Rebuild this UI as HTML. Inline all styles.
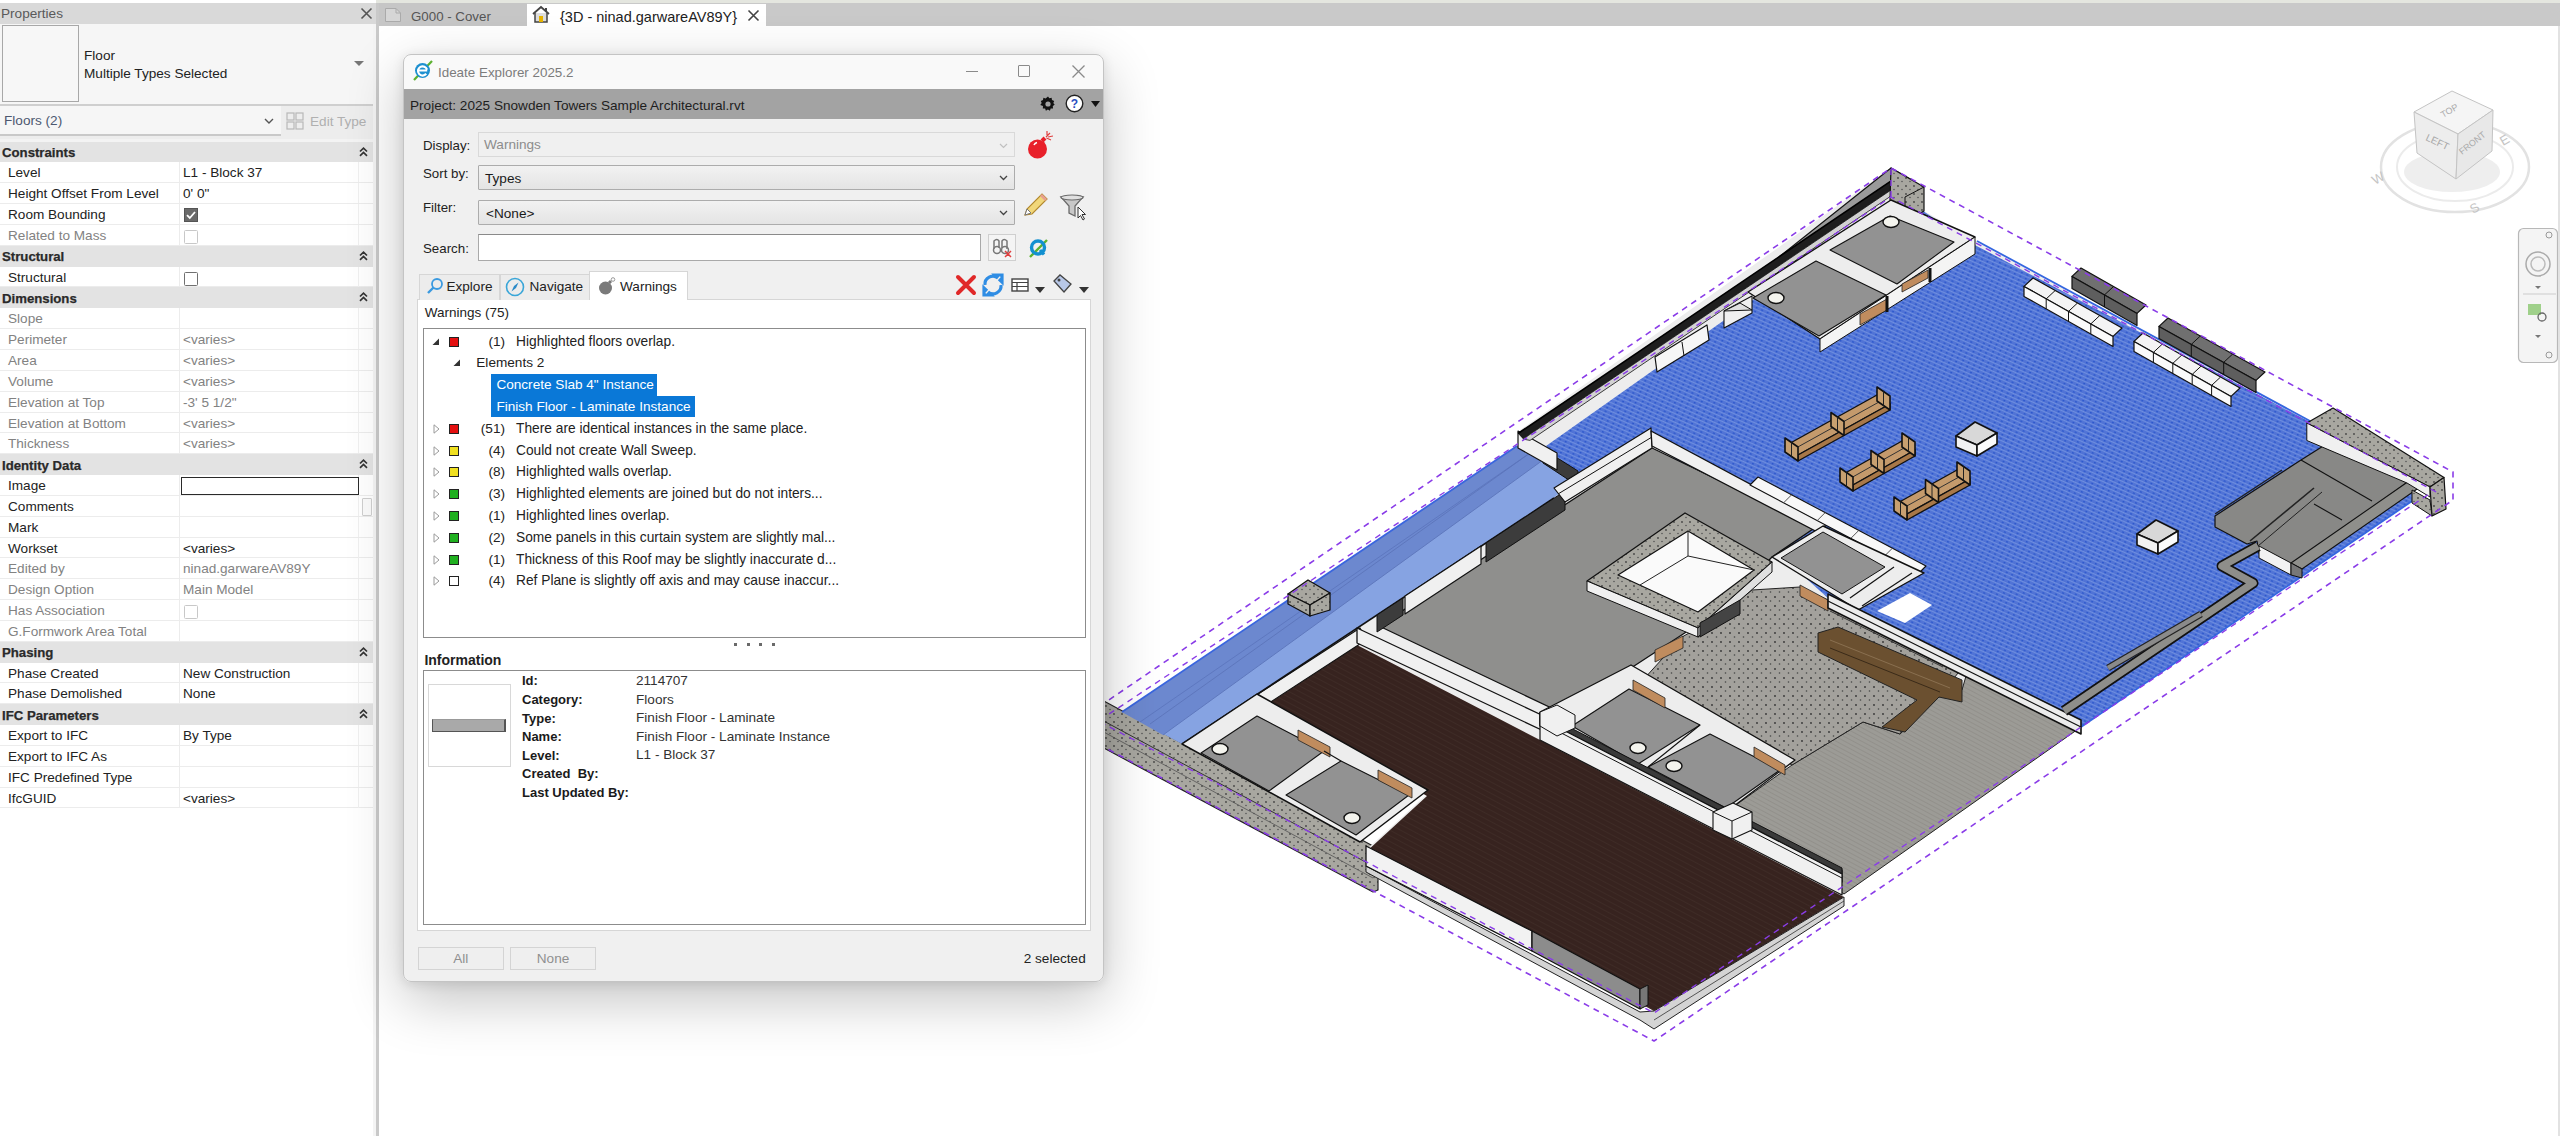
<!DOCTYPE html>
<html><head><meta charset="utf-8">
<style>
*{margin:0;padding:0;box-sizing:border-box}
html,body{width:2560px;height:1136px;overflow:hidden;background:#fff;font-family:"Liberation Sans",sans-serif;font-size:13.6px;color:#222}
.a{position:absolute}
.t{position:absolute;white-space:nowrap;line-height:1}
#props{left:0;top:0;width:376px;height:1136px;background:#fff}
.row{position:absolute;left:0;width:373px;height:21px;border-bottom:1px solid #ececec;background:#fff}
.row .l{position:absolute;left:8px;top:3px;white-space:nowrap}
.row .v{position:absolute;left:183px;top:3px;white-space:nowrap}
.row .c{position:absolute;left:179px;top:0;width:1px;height:20px;background:#ececec}
.row .c2{position:absolute;left:358px;top:0;width:1px;height:20px;background:#f0f0f0}
.hdr{position:absolute;left:0;width:373px;height:20px;background:#e3e3e3;font-weight:bold;color:#2a2a2a}
.hdr .l{position:absolute;left:2px;top:3.6px;font-size:13.2px;white-space:nowrap;-webkit-text-stroke:0.25px #2a2a2a}
.hdr .ch{position:absolute;left:359px;top:5px;width:9px;height:10px}
.g{color:#828282}
.cb{position:absolute;left:185px;top:4px;width:13px;height:13px;border:1px solid #6e6e6e;background:#fff}
.cb.g2{border-color:#c8c8c8}
</style></head><body>
<!-- top strip -->
<div class="a" style="left:0;top:0;width:2560px;height:3px;background:#e4e6df"></div>
<!-- properties panel -->
<div id="props" class="a">
  <div class="a" style="left:0;top:3px;width:376px;height:21px;background:#d9d9d9"></div>
  <div class="t" style="left:1px;top:7px;font-size:13.6px;color:#5a5a5a">Properties</div>
  <svg class="a" style="left:360px;top:7px" width="13" height="13"><path d="M1.5 1.5L11.5 11.5M11.5 1.5L1.5 11.5" stroke="#555" stroke-width="1.6"/></svg>
  <div class="a" style="left:0;top:24px;width:373px;height:81px;background:#f6f6f6"></div>
  <div class="a" style="left:2px;top:25px;width:77px;height:77px;border:1.5px solid #a8a8a8;background:#f7f7f7"></div>
  <div class="t" style="left:84px;top:49px">Floor</div>
  <div class="t" style="left:84px;top:67px">Multiple Types Selected</div>
  <svg class="a" style="left:354px;top:61px" width="10" height="6"><path d="M0 0L10 0L5 5Z" fill="#777"/></svg>
  <div class="a" style="left:0;top:104px;width:373px;height:2px;background:#cfcfcf"></div>
  <div class="a" style="left:0;top:106px;width:373px;height:34px;background:#ededed"></div>
  <div class="a" style="left:0;top:106px;width:281px;height:30px;background:#f6f6f6;border-bottom:2px solid #c9c9c9"></div>
  <div class="t" style="left:4px;top:114px;color:#4d5870">Floors (2)</div>
  <svg class="a" style="left:264px;top:118px" width="10" height="6"><path d="M1 1L5 5L9 1" stroke="#555" stroke-width="1.4" fill="none"/></svg>
  <svg class="a" style="left:286px;top:112px" width="18" height="18"><g fill="none" stroke="#b8b8b8" stroke-width="1.2"><rect x="1" y="1" width="7" height="7"/><rect x="10" y="1" width="7" height="7"/><rect x="1" y="10" width="7" height="7"/><rect x="10" y="10" width="7" height="7"/></g></svg>
  <div class="t" style="left:310px;top:115px;color:#b0b0b0">Edit Type</div>
  <div class="a" style="left:0;top:139px;width:373px;height:3px;background:#f3f3f3"></div>
  <div class="hdr" style="top:141.60px;height:20.84px"><span class="l">Constraints</span><svg class="ch" viewBox="0 0 9 10"><path d="M1 4.5L4.5 1.2L8 4.5M1 8.8L4.5 5.5L8 8.8" fill="none" stroke="#333" stroke-width="1.7"/></svg></div>
<div class="row" style="top:162.44px;height:20.84px"><span class="l">Level</span><span class="c"></span><span class="c2"></span><span class="v">L1 - Block 37</span></div>
<div class="row" style="top:183.28px;height:20.84px"><span class="l">Height Offset From Level</span><span class="c"></span><span class="c2"></span><span class="v">0'  0"</span></div>
<div class="row" style="top:204.12px;height:20.84px"><span class="l">Room Bounding</span><span class="c"></span><span class="c2"></span><svg class="a" style="left:184px;top:4px" width="14" height="14"><rect x="0.5" y="0.5" width="13" height="13" fill="#6a6a6a" stroke="#555"/><path d="M3 7.2L5.8 10L11 4" fill="none" stroke="#fff" stroke-width="1.8"/></svg></div>
<div class="row" style="top:224.96px;height:20.84px"><span class="l g">Related to Mass</span><span class="c"></span><span class="c2"></span><svg class="a" style="left:184px;top:5px" width="14" height="14"><rect x="0.5" y="0.5" width="13" height="13" rx="1" fill="#fff" stroke="#c8c8c8"/></svg></div>
<div class="hdr" style="top:245.80px;height:20.84px"><span class="l">Structural</span><svg class="ch" viewBox="0 0 9 10"><path d="M1 4.5L4.5 1.2L8 4.5M1 8.8L4.5 5.5L8 8.8" fill="none" stroke="#333" stroke-width="1.7"/></svg></div>
<div class="row" style="top:266.64px;height:20.84px"><span class="l">Structural</span><span class="c"></span><span class="c2"></span><svg class="a" style="left:184px;top:5px" width="14" height="14"><rect x="0.5" y="0.5" width="13" height="13" rx="1" fill="#fff" stroke="#707070"/></svg></div>
<div class="hdr" style="top:287.48px;height:20.84px"><span class="l">Dimensions</span><svg class="ch" viewBox="0 0 9 10"><path d="M1 4.5L4.5 1.2L8 4.5M1 8.8L4.5 5.5L8 8.8" fill="none" stroke="#333" stroke-width="1.7"/></svg></div>
<div class="row" style="top:308.32px;height:20.84px"><span class="l g">Slope</span><span class="c"></span><span class="c2"></span><span class="v g"></span></div>
<div class="row" style="top:329.16px;height:20.84px"><span class="l g">Perimeter</span><span class="c"></span><span class="c2"></span><span class="v g">&lt;varies&gt;</span></div>
<div class="row" style="top:350.00px;height:20.84px"><span class="l g">Area</span><span class="c"></span><span class="c2"></span><span class="v g">&lt;varies&gt;</span></div>
<div class="row" style="top:370.84px;height:20.84px"><span class="l g">Volume</span><span class="c"></span><span class="c2"></span><span class="v g">&lt;varies&gt;</span></div>
<div class="row" style="top:391.68px;height:20.84px"><span class="l g">Elevation at Top</span><span class="c"></span><span class="c2"></span><span class="v g">-3'  5 1/2"</span></div>
<div class="row" style="top:412.52px;height:20.84px"><span class="l g">Elevation at Bottom</span><span class="c"></span><span class="c2"></span><span class="v g">&lt;varies&gt;</span></div>
<div class="row" style="top:433.36px;height:20.84px"><span class="l g">Thickness</span><span class="c"></span><span class="c2"></span><span class="v g">&lt;varies&gt;</span></div>
<div class="hdr" style="top:454.20px;height:20.84px"><span class="l">Identity Data</span><svg class="ch" viewBox="0 0 9 10"><path d="M1 4.5L4.5 1.2L8 4.5M1 8.8L4.5 5.5L8 8.8" fill="none" stroke="#333" stroke-width="1.7"/></svg></div>
<div class="row" style="top:475.04px;height:20.84px"><span class="l">Image</span><span class="c"></span><span class="c2"></span><span class="a" style="left:181px;top:2px;width:178px;height:18px;border:1.6px solid #2a2a2a;background:#fff"></span></div>
<div class="row" style="top:495.88px;height:20.84px"><span class="l">Comments</span><span class="c"></span><span class="c2"></span><span class="a" style="left:362px;top:2px;width:10px;height:18px;border:1px solid #cfcfcf;border-radius:1px;background:#fafafa"></span></div>
<div class="row" style="top:516.72px;height:20.84px"><span class="l">Mark</span><span class="c"></span><span class="c2"></span><span class="v"></span></div>
<div class="row" style="top:537.56px;height:20.84px"><span class="l">Workset</span><span class="c"></span><span class="c2"></span><span class="v">&lt;varies&gt;</span></div>
<div class="row" style="top:558.40px;height:20.84px"><span class="l g">Edited by</span><span class="c"></span><span class="c2"></span><span class="v g">ninad.garwareAV89Y</span></div>
<div class="row" style="top:579.24px;height:20.84px"><span class="l g">Design Option</span><span class="c"></span><span class="c2"></span><span class="v g">Main Model</span></div>
<div class="row" style="top:600.08px;height:20.84px"><span class="l g">Has Association</span><span class="c"></span><span class="c2"></span><svg class="a" style="left:184px;top:5px" width="14" height="14"><rect x="0.5" y="0.5" width="13" height="13" rx="1" fill="#fff" stroke="#c8c8c8"/></svg></div>
<div class="row" style="top:620.92px;height:20.84px"><span class="l g">G.Formwork Area Total</span><span class="c"></span><span class="c2"></span><span class="v g"></span></div>
<div class="hdr" style="top:641.76px;height:20.84px"><span class="l">Phasing</span><svg class="ch" viewBox="0 0 9 10"><path d="M1 4.5L4.5 1.2L8 4.5M1 8.8L4.5 5.5L8 8.8" fill="none" stroke="#333" stroke-width="1.7"/></svg></div>
<div class="row" style="top:662.60px;height:20.84px"><span class="l">Phase Created</span><span class="c"></span><span class="c2"></span><span class="v">New Construction</span></div>
<div class="row" style="top:683.44px;height:20.84px"><span class="l">Phase Demolished</span><span class="c"></span><span class="c2"></span><span class="v">None</span></div>
<div class="hdr" style="top:704.28px;height:20.84px"><span class="l">IFC Parameters</span><svg class="ch" viewBox="0 0 9 10"><path d="M1 4.5L4.5 1.2L8 4.5M1 8.8L4.5 5.5L8 8.8" fill="none" stroke="#333" stroke-width="1.7"/></svg></div>
<div class="row" style="top:725.12px;height:20.84px"><span class="l">Export to IFC</span><span class="c"></span><span class="c2"></span><span class="v">By Type</span></div>
<div class="row" style="top:745.96px;height:20.84px"><span class="l">Export to IFC As</span><span class="c"></span><span class="c2"></span><span class="v"></span></div>
<div class="row" style="top:766.80px;height:20.84px"><span class="l">IFC Predefined Type</span><span class="c"></span><span class="c2"></span><span class="v"></span></div>
<div class="row" style="top:787.64px;height:20.84px"><span class="l">IfcGUID</span><span class="c"></span><span class="c2"></span><span class="v">&lt;varies&gt;</span></div>
  <!-- panel divider -->
  <div class="a" style="left:373px;top:24px;width:3px;height:1112px;background:#f4f4f4"></div>
</div>
<div class="a" style="left:376px;top:3px;width:3px;height:1133px;background:#c9c9c9"></div>

<!-- tab bar -->
<div class="a" style="left:379px;top:3px;width:2181px;height:23px;background:#c9c9c9"></div>
<div class="a" style="left:379px;top:3px;width:148px;height:23px;background:#c6c6c6"></div>
<svg class="a" style="left:384px;top:7px" width="18" height="16"><path d="M1.5 1.5H12L16.5 6V14.5H1.5Z" fill="#d6d6d6" stroke="#aaa" stroke-width="1"/><path d="M12 1.5V6H16.5" fill="none" stroke="#aaa"/></svg>
<div class="t" style="left:411px;top:10px;color:#555;font-size:13.3px">G000 - Cover</div>
<div class="a" style="left:527px;top:4px;width:239px;height:22px;background:#fff"></div>
<svg class="a" style="left:531px;top:5px" width="20" height="18"><path d="M2 9L10 2L18 9" fill="none" stroke="#444" stroke-width="1.8"/><path d="M4 8V17H16V8" fill="#ddd" stroke="#444" stroke-width="1.5"/><rect x="8" y="11" width="4" height="6" fill="#e8b400"/><rect x="14" y="3" width="2" height="4" fill="#444"/></svg>
<div class="t" style="left:560px;top:9.5px;color:#222;font-size:14.5px">{3D - ninad.garwareAV89Y}</div>
<svg class="a" style="left:747px;top:9px" width="13" height="13"><path d="M1.5 1.5L11.5 11.5M11.5 1.5L1.5 11.5" stroke="#444" stroke-width="1.6"/></svg>

<!-- 3D view -->
<div id="view" class="a" style="left:379px;top:26px;width:2181px;height:1110px;background:#fff"></div>
<svg class="a" style="left:0;top:0" width="2560" height="1136" viewBox="0 0 2560 1136">
<defs>
<clipPath id="vclip"><rect x="1105" y="26" width="1455" height="1110"/></clipPath>
<pattern id="blue" width="6" height="4" patternUnits="userSpaceOnUse" patternTransform="rotate(24)">
<rect width="6" height="4" fill="#5073d6"/><rect y="0" width="6" height="1.1" fill="#6e8edf"/><rect x="1" y="2" width="2" height="1.4" fill="#2d58cc"/></pattern>
<pattern id="speck" width="9" height="9" patternUnits="userSpaceOnUse">
<rect width="9" height="9" fill="#a3a19c"/><circle cx="2" cy="3" r="0.9" fill="#333"/><circle cx="6.5" cy="7" r="0.8" fill="#444"/></pattern>
<pattern id="conc" width="8" height="8" patternUnits="userSpaceOnUse">
<rect width="8" height="8" fill="#a8a7a0"/><circle cx="2" cy="2" r="0.9" fill="#444"/><circle cx="6" cy="5.5" r="0.8" fill="#555"/></pattern>
<pattern id="brown" width="6" height="5" patternUnits="userSpaceOnUse" patternTransform="rotate(28)">
<rect width="6" height="5" fill="#37231f"/><rect width="6" height="1" fill="#3e2b26"/></pattern>
<pattern id="gfl" width="6" height="4" patternUnits="userSpaceOnUse" patternTransform="rotate(28)">
<rect width="6" height="4" fill="#9c9b96"/><rect width="6" height="1" fill="#92908b"/></pattern>
</defs>
<g clip-path="url(#vclip)">
<polygon points="1100.0,699.0 1373.0,846.0 1378.0,849.0 1378.0,890.0 1373.0,892.0 1100.0,746.0" fill="url(#conc)" stroke="#222" stroke-width="1.2" stroke-linejoin="round" />
<polyline points="1100.0,719.0 1373.0,866.0" fill="none" stroke="#333" stroke-width="1" stroke-linejoin="round" />
<polyline points="1100.0,730.0 1373.0,878.0" fill="none" stroke="#555" stroke-width="0.8" stroke-linejoin="round" />
<polygon points="1122.0,712.0 1517.0,446.0 1578.0,478.0 1554.0,498.0 1182.0,744.0" fill="#86a3e2" stroke="none" stroke-width="1" stroke-linejoin="round" />
<polygon points="1122.0,712.0 1517.0,446.0 1543.0,460.0 1163.0,735.0" fill="#6c88cf" stroke="none" stroke-width="1" stroke-linejoin="round" />
<polyline points="1150.0,724.0 1530.0,453.0" fill="none" stroke="#5a72b8" stroke-width="0.8" stroke-linejoin="round" />
<polyline points="1163.0,735.0 1543.0,460.0" fill="none" stroke="#5f78bd" stroke-width="1" stroke-linejoin="round" />
<polyline points="1122.0,712.0 1517.0,446.0" fill="none" stroke="#3a66de" stroke-width="1.8" stroke-linejoin="round" />
<polyline points="1140.0,722.0 1530.0,453.0" fill="none" stroke="#5a74bb" stroke-width="0.8" stroke-linejoin="round" />
<polygon points="1308.0,580.0 1330.0,593.0 1310.0,605.0 1288.0,594.0" fill="url(#conc)" stroke="#111" stroke-width="1.3" stroke-linejoin="round" />
<polygon points="1288.0,594.0 1310.0,605.0 1310.0,616.0 1288.0,604.0" fill="url(#conc)" stroke="#111" stroke-width="1.3" stroke-linejoin="round" />
<polygon points="1310.0,605.0 1330.0,593.0 1330.0,610.0 1310.0,616.0" fill="url(#conc)" stroke="#111" stroke-width="1.3" stroke-linejoin="round" />
<polygon points="1182.0,744.0 1554.0,498.0 1578.0,478.0 1520.0,430.0 1891.0,168.0 1924.0,187.0 1924.0,211.0 1977.0,241.0 2308.0,419.0 2418.0,497.0 2081.0,727.0 1844.0,894.0 1654.0,1011.0 1366.0,850.0 1427.0,794.0 1257.0,694.0" fill="#ededed" stroke="none" stroke-width="1" stroke-linejoin="round" />
<polygon points="1546.0,446.0 1900.0,196.0 1975.0,245.0 2310.0,422.0 2418.0,497.0 2081.0,727.0 1830.0,600.0 1652.0,438.0 1590.0,467.0 1578.0,478.0" fill="url(#blue)" stroke="none" stroke-width="1" stroke-linejoin="round" />
<polyline points="1977.0,241.0 2310.0,421.0" fill="none" stroke="#3466e0" stroke-width="1.8" stroke-linejoin="round" />
<polyline points="2418.0,497.0 2081.0,727.0" fill="none" stroke="#3466e0" stroke-width="1.8" stroke-linejoin="round" />
<polygon points="1652.0,448.0 1816.0,527.0 1772.0,557.0 1740.0,590.0 1700.0,623.0 1562.0,713.0 1379.0,626.0" fill="#8f8f8d" stroke="#111" stroke-width="1.3" stroke-linejoin="round" />
<polygon points="1266.0,703.0 1357.0,645.0 1540.0,740.0 1844.0,897.0 1654.0,1011.0 1366.0,852.0 1427.0,796.0" fill="url(#brown)" stroke="none" stroke-width="1" stroke-linejoin="round" />
<polygon points="1258.0,694.0 1360.0,628.0 1366.0,640.0 1266.0,705.0" fill="#f0f0f0" stroke="#111" stroke-width="1.2" stroke-linejoin="round" />
<polyline points="1182.0,744.0 1554.0,498.0" fill="none" stroke="#111" stroke-width="1.6" stroke-linejoin="round" />
<polygon points="1366.0,866.0 1640.0,1012.0 1654.0,1011.0 1844.0,897.0 1844.0,906.0 1654.0,1029.0 1640.0,1020.0 1366.0,872.0" fill="#d4d4d4" stroke="#222" stroke-width="1" stroke-linejoin="round" />
<polyline points="1654.0,1020.0 1844.0,901.0" fill="none" stroke="#333" stroke-width="0.8" stroke-linejoin="round" />
<polygon points="1792.0,765.0 1863.0,722.0 1900.0,734.0 1939.0,697.0 1962.0,690.0 1966.0,676.0 2081.0,727.0 1844.0,894.0 1726.0,812.0" fill="url(#gfl)" stroke="#222" stroke-width="1" stroke-linejoin="round" />
<polygon points="1643.0,680.0 1682.0,637.0 1723.0,614.0 1752.0,590.0 1800.0,587.0 1828.0,600.0 1962.0,668.0 1939.0,697.0 1900.0,734.0 1863.0,722.0 1792.0,765.0 1631.0,678.0" fill="url(#speck)" stroke="#222" stroke-width="1" stroke-linejoin="round" />
<polygon points="1818.0,633.0 1838.0,627.0 1962.0,680.0 1962.0,702.0 1939.0,697.0 1905.0,732.0 1882.0,727.0 1917.0,700.0 1818.0,652.0" fill="#6b5030" stroke="#222" stroke-width="1" stroke-linejoin="round" />
<polyline points="1830.0,648.0 1940.0,692.0" fill="none" stroke="#3a2a18" stroke-width="1" stroke-linejoin="round" />
<polyline points="1830.0,640.0 1950.0,688.0" fill="none" stroke="#8a7050" stroke-width="1" stroke-linejoin="round" />
<polygon points="1182.0,744.0 1257.0,694.0 1428.0,790.0 1360.0,842.0" fill="#ededed" stroke="#111" stroke-width="1.5" stroke-linejoin="round" />
<polygon points="1257.0,716.0 1324.0,751.0 1269.0,791.0 1201.0,753.0" fill="#929292" stroke="#111" stroke-width="1.1" stroke-linejoin="round" />
<polygon points="1341.0,761.0 1409.0,795.0 1356.0,835.0 1286.0,795.0" fill="#929292" stroke="#111" stroke-width="1.1" stroke-linejoin="round" />
<polygon points="1298.0,730.0 1330.0,747.0 1330.0,757.0 1298.0,740.0" fill="#c08c5e" stroke="#222" stroke-width="0.8" stroke-linejoin="round" />
<polygon points="1378.0,770.0 1412.0,788.0 1412.0,798.0 1378.0,780.0" fill="#c08c5e" stroke="#222" stroke-width="0.8" stroke-linejoin="round" />
<polyline points="1324.0,751.0 1341.0,761.0" fill="none" stroke="#111" stroke-width="1.2" stroke-linejoin="round" />
<ellipse cx="1220" cy="749" rx="8" ry="5.5" fill="#f4f4ee" stroke="#111" stroke-width="1.4"/>
<ellipse cx="1352" cy="818" rx="8" ry="5.5" fill="#f4f4ee" stroke="#111" stroke-width="1.4"/>
<polygon points="1366.0,846.0 1532.0,931.0 1532.0,951.0 1366.0,866.0" fill="#f2f2f2" stroke="#111" stroke-width="1.3" stroke-linejoin="round" />
<polygon points="1532.0,931.0 1640.0,989.0 1640.0,1009.0 1532.0,951.0" fill="#8c8c8c" stroke="#111" stroke-width="1.3" stroke-linejoin="round" />
<polygon points="1640.0,989.0 1648.0,985.0 1648.0,1005.0 1640.0,1009.0" fill="#777" stroke="#111" stroke-width="1" stroke-linejoin="round" />
<polygon points="1357.0,628.0 1548.0,718.0 1548.0,733.0 1357.0,643.0" fill="#f0f0f0" stroke="#111" stroke-width="1.3" stroke-linejoin="round" />
<polygon points="1565.0,491.0 1486.0,543.0 1486.0,562.0 1565.0,510.0" fill="#3c3c3c" stroke="#111" stroke-width="1" stroke-linejoin="round" />
<polygon points="1481.0,546.0 1405.0,596.0 1405.0,614.0 1481.0,564.0" fill="#f0f0f0" stroke="#111" stroke-width="1.2" stroke-linejoin="round" />
<polygon points="1403.0,598.0 1377.0,615.0 1377.0,632.0 1403.0,615.0" fill="#3c3c3c" stroke="#111" stroke-width="1" stroke-linejoin="round" />
<polygon points="1543.0,449.0 1578.0,471.0 1578.0,486.0 1543.0,463.0" fill="#3c3c3c" stroke="#111" stroke-width="1" stroke-linejoin="round" />
<polygon points="1518.0,431.0 1557.0,453.0 1557.0,470.0 1518.0,448.0" fill="#f0f0f0" stroke="#111" stroke-width="1.2" stroke-linejoin="round" />
<polygon points="1554.0,488.0 1651.0,428.0 1652.0,448.0 1565.0,502.0" fill="#f0f0f0" stroke="#111" stroke-width="1.2" stroke-linejoin="round" />
<polyline points="1558.0,494.0 1652.0,437.0" fill="none" stroke="#111" stroke-width="1" stroke-linejoin="round" />
<polygon points="1651.0,431.0 1825.0,524.0 1825.0,536.0 1652.0,446.0" fill="#f0f0f0" stroke="#111" stroke-width="1.3" stroke-linejoin="round" />
<polygon points="1685.0,513.0 1772.0,562.0 1698.0,628.0 1587.0,581.0" fill="url(#conc)" stroke="#111" stroke-width="1.3" stroke-linejoin="round" />
<polygon points="1587.0,581.0 1698.0,628.0 1698.0,637.0 1587.0,591.0" fill="#f0f0f0" stroke="#111" stroke-width="1" stroke-linejoin="round" />
<polygon points="1698.0,628.0 1772.0,562.0 1772.0,572.0 1698.0,637.0" fill="#e0e0e0" stroke="#111" stroke-width="1" stroke-linejoin="round" />
<polygon points="1688.0,531.0 1754.0,570.0 1698.0,612.0 1618.0,575.0" fill="#fafafa" stroke="#111" stroke-width="1.2" stroke-linejoin="round" />
<polyline points="1688.0,531.0 1688.0,556.0 1754.0,570.0" fill="none" stroke="#222" stroke-width="1" stroke-linejoin="round" />
<polyline points="1688.0,556.0 1640.0,585.0" fill="none" stroke="#222" stroke-width="1" stroke-linejoin="round" />
<polygon points="1700.0,623.0 1740.0,600.0 1740.0,614.0 1700.0,637.0" fill="#444" stroke="#111" stroke-width="1" stroke-linejoin="round" />
<polygon points="1758.0,477.0 1926.0,566.0 1918.0,574.0 1750.0,485.0" fill="#f8f8f8" stroke="#111" stroke-width="1.1" stroke-linejoin="round" />
<polyline points="1791.6,494.8 1783.6,502.8" fill="none" stroke="#555" stroke-width="1" stroke-linejoin="round" />
<polyline points="1825.2,512.6 1817.2,520.6" fill="none" stroke="#555" stroke-width="1" stroke-linejoin="round" />
<polyline points="1858.8,530.4 1850.8,538.4" fill="none" stroke="#555" stroke-width="1" stroke-linejoin="round" />
<polyline points="1892.4,548.2 1884.4,556.2" fill="none" stroke="#555" stroke-width="1" stroke-linejoin="round" />
<polygon points="1823.0,526.0 1924.0,573.0 1858.0,610.0 1772.0,557.0" fill="#ededed" stroke="#111" stroke-width="1.4" stroke-linejoin="round" />
<polygon points="1823.0,532.0 1885.0,567.0 1842.0,594.0 1781.0,558.0" fill="#929292" stroke="#111" stroke-width="1" stroke-linejoin="round" />
<polyline points="1894.0,567.0 1850.0,598.0" fill="none" stroke="#111" stroke-width="1.2" stroke-linejoin="round" />
<polyline points="1912.0,573.0 1862.0,606.0" fill="none" stroke="#111" stroke-width="1.2" stroke-linejoin="round" />
<polygon points="1877.0,611.0 1910.0,593.0 1932.0,605.0 1905.0,623.0" fill="#ffffff" stroke="none" stroke-width="1" stroke-linejoin="round" />
<polygon points="1800.0,585.0 1828.0,600.0 1828.0,611.0 1800.0,596.0" fill="#c08c5e" stroke="#222" stroke-width="0.8" stroke-linejoin="round" />
<polygon points="1828.0,594.0 2081.0,720.0 2081.0,734.0 1828.0,608.0" fill="#ececec" stroke="#111" stroke-width="1.6" stroke-linejoin="round" />
<polyline points="1828.0,601.0 2081.0,727.0" fill="none" stroke="#111" stroke-width="1.2" stroke-linejoin="round" />
<polyline points="1830.0,611.0 1943.0,667.0" fill="none" stroke="#333" stroke-width="1" stroke-linejoin="round" />
<polygon points="1540.0,712.0 1631.0,665.0 1795.0,760.0 1726.0,812.0 1842.0,870.0 1842.0,882.0 1540.0,726.0" fill="#ededed" stroke="#111" stroke-width="1.3" stroke-linejoin="round" />
<polygon points="1629.0,689.0 1700.0,725.0 1638.0,764.0 1572.0,726.0" fill="#929292" stroke="#111" stroke-width="1.1" stroke-linejoin="round" />
<polygon points="1710.0,734.0 1780.0,770.0 1726.0,808.0 1648.0,767.0" fill="#929292" stroke="#111" stroke-width="1.1" stroke-linejoin="round" />
<polygon points="1633.0,680.0 1665.0,698.0 1665.0,708.0 1633.0,690.0" fill="#c08c5e" stroke="#222" stroke-width="0.8" stroke-linejoin="round" />
<polygon points="1754.0,747.0 1785.0,765.0 1785.0,775.0 1754.0,757.0" fill="#c08c5e" stroke="#222" stroke-width="0.8" stroke-linejoin="round" />
<polygon points="1683.0,636.0 1655.0,650.0 1655.0,662.0 1683.0,648.0" fill="#c08c5e" stroke="#222" stroke-width="0.8" stroke-linejoin="round" />
<polyline points="1700.0,725.0 1648.0,767.0" fill="none" stroke="#111" stroke-width="1.2" stroke-linejoin="round" />
<ellipse cx="1638" cy="748" rx="8" ry="5.5" fill="#f4f4ee" stroke="#111" stroke-width="1.4"/>
<ellipse cx="1674" cy="766" rx="8" ry="5.5" fill="#f4f4ee" stroke="#111" stroke-width="1.4"/>
<polygon points="1540.0,712.0 1842.0,868.0 1842.0,874.0 1540.0,718.0" fill="#3a3a3a" stroke="#111" stroke-width="1" stroke-linejoin="round" />
<polygon points="1540.0,718.0 1842.0,874.0 1842.0,895.0 1540.0,740.0" fill="#f0f0f0" stroke="#111" stroke-width="1.2" stroke-linejoin="round" />
<polyline points="1540.0,722.0 1842.0,878.0" fill="none" stroke="#111" stroke-width="1" stroke-linejoin="round" />
<polygon points="1713.0,812.0 1733.0,803.0 1752.0,812.0 1752.0,830.0 1732.0,839.0 1713.0,830.0" fill="#f0f0f0" stroke="#111" stroke-width="1.1" stroke-linejoin="round" />
<polyline points="1713.0,812.0 1732.0,821.0 1752.0,812.0" fill="none" stroke="#111" stroke-width="1" stroke-linejoin="round" />
<polyline points="1732.0,821.0 1732.0,839.0" fill="none" stroke="#111" stroke-width="1" stroke-linejoin="round" />
<polygon points="1540.0,712.0 1557.0,705.0 1575.0,715.0 1575.0,728.0 1557.0,736.0 1540.0,726.0" fill="#f0f0f0" stroke="#111" stroke-width="1" stroke-linejoin="round" />
<polygon points="1891.0,168.0 1912.0,180.0 1760.0,284.0 1745.0,284.0" fill="#9a9a9a" stroke="#111" stroke-width="1.2" stroke-linejoin="round" />
<polygon points="1518.0,433.5 1893.0,179.6 1900.0,183.9 1523.0,439.1" fill="#1e1e1e" stroke="none" stroke-width="1" stroke-linejoin="round" />
<polygon points="1523.0,439.1 1900.0,183.9 1906.0,185.8 1530.0,440.4" fill="#d2d2d2" stroke="#111" stroke-width="0.8" stroke-linejoin="round" />
<polyline points="1518.0,433.5 1893.0,179.6" fill="none" stroke="#000" stroke-width="1.6" stroke-linejoin="round" />
<polygon points="1891.0,168.0 1924.0,187.0 1924.0,211.0 1905.0,222.0 1890.0,200.0" fill="url(#conc)" stroke="#111" stroke-width="1.2" stroke-linejoin="round" />
<polyline points="1905.0,197.0 1924.0,187.0" fill="none" stroke="#111" stroke-width="1" stroke-linejoin="round" />
<polyline points="1905.0,197.0 1905.0,222.0" fill="none" stroke="#111" stroke-width="1" stroke-linejoin="round" />
<polygon points="1748.0,292.0 1891.0,200.0 1975.0,237.0 1820.0,339.0" fill="#ededed" stroke="#111" stroke-width="1.4" stroke-linejoin="round" />
<polygon points="1975.0,237.0 1975.0,254.0 1820.0,352.0 1820.0,339.0" fill="#f4f4f4" stroke="#111" stroke-width="1" stroke-linejoin="round" />
<polygon points="1816.0,261.0 1886.0,295.0 1819.0,336.0 1753.0,298.0" fill="#929292" stroke="#111" stroke-width="1.1" stroke-linejoin="round" />
<polygon points="1890.0,216.0 1954.0,242.0 1897.0,284.0 1830.0,250.0" fill="#929292" stroke="#111" stroke-width="1.1" stroke-linejoin="round" />
<polygon points="1860.0,314.0 1887.0,299.0 1887.0,310.0 1860.0,325.0" fill="#c08c5e" stroke="#222" stroke-width="0.8" stroke-linejoin="round" />
<polygon points="1902.0,284.0 1928.0,270.0 1928.0,278.0 1902.0,292.0" fill="#c08c5e" stroke="#222" stroke-width="0.8" stroke-linejoin="round" />
<polyline points="1887.0,296.0 1887.0,312.0" fill="none" stroke="#111" stroke-width="3" stroke-linejoin="round" />
<polyline points="1930.0,268.0 1930.0,282.0" fill="none" stroke="#111" stroke-width="3" stroke-linejoin="round" />
<polygon points="1724.0,311.0 1752.0,296.0 1752.0,313.0 1724.0,328.0" fill="#f0f0f0" stroke="#111" stroke-width="1.1" stroke-linejoin="round" />
<polygon points="1724.0,311.0 1740.0,303.0 1752.0,310.0" fill="#e0e0e0" stroke="#111" stroke-width="1" stroke-linejoin="round" />
<ellipse cx="1776" cy="298" rx="8" ry="5.5" fill="#f4f4ee" stroke="#111" stroke-width="1.4"/>
<ellipse cx="1891" cy="222" rx="8" ry="5.5" fill="#f4f4ee" stroke="#111" stroke-width="1.4"/>
<polygon points="1655.0,357.0 1707.0,325.0 1709.0,340.0 1657.0,372.0" fill="#f6f6f6" stroke="#111" stroke-width="1.2" stroke-linejoin="round" />
<polyline points="1682.0,342.0 1684.0,356.0" fill="none" stroke="#111" stroke-width="1" stroke-linejoin="round" />
<polygon points="1785.0,446.0 1877.0,395.0 1890.0,404.0 1798.0,455.0" fill="#c49a6c" stroke="#111" stroke-width="1.4" stroke-linejoin="round" />
<polygon points="1798.0,455.0 1890.0,404.0 1890.0,410.0 1798.0,461.0" fill="#a87848" stroke="#111" stroke-width="1.4" stroke-linejoin="round" />
<polyline points="1791.5,450.5 1883.5,399.5" fill="none" stroke="#333" stroke-width="1" stroke-linejoin="round" />
<polygon points="1785.0,438.0 1798.0,447.0 1798.0,461.0 1785.0,452.0" fill="#c8a070" stroke="#111" stroke-width="1.6" stroke-linejoin="round" />
<polyline points="1791.5,442.5 1791.5,456.5" fill="none" stroke="#222" stroke-width="1" stroke-linejoin="round" />
<polygon points="1831.0,412.5 1844.0,421.5 1844.0,435.5 1831.0,426.5" fill="#c8a070" stroke="#111" stroke-width="1.6" stroke-linejoin="round" />
<polyline points="1837.5,417.0 1837.5,431.0" fill="none" stroke="#222" stroke-width="1" stroke-linejoin="round" />
<polygon points="1877.0,387.0 1890.0,396.0 1890.0,410.0 1877.0,401.0" fill="#c8a070" stroke="#111" stroke-width="1.6" stroke-linejoin="round" />
<polyline points="1883.5,391.5 1883.5,405.5" fill="none" stroke="#222" stroke-width="1" stroke-linejoin="round" />
<polygon points="1840.0,476.0 1902.0,441.0 1915.0,450.0 1853.0,485.0" fill="#c49a6c" stroke="#111" stroke-width="1.4" stroke-linejoin="round" />
<polygon points="1853.0,485.0 1915.0,450.0 1915.0,456.0 1853.0,491.0" fill="#a87848" stroke="#111" stroke-width="1.4" stroke-linejoin="round" />
<polyline points="1846.5,480.5 1908.5,445.5" fill="none" stroke="#333" stroke-width="1" stroke-linejoin="round" />
<polygon points="1840.0,468.0 1853.0,477.0 1853.0,491.0 1840.0,482.0" fill="#c8a070" stroke="#111" stroke-width="1.6" stroke-linejoin="round" />
<polyline points="1846.5,472.5 1846.5,486.5" fill="none" stroke="#222" stroke-width="1" stroke-linejoin="round" />
<polygon points="1871.0,450.5 1884.0,459.5 1884.0,473.5 1871.0,464.5" fill="#c8a070" stroke="#111" stroke-width="1.6" stroke-linejoin="round" />
<polyline points="1877.5,455.0 1877.5,469.0" fill="none" stroke="#222" stroke-width="1" stroke-linejoin="round" />
<polygon points="1902.0,433.0 1915.0,442.0 1915.0,456.0 1902.0,447.0" fill="#c8a070" stroke="#111" stroke-width="1.6" stroke-linejoin="round" />
<polyline points="1908.5,437.5 1908.5,451.5" fill="none" stroke="#222" stroke-width="1" stroke-linejoin="round" />
<polygon points="1894.0,505.0 1957.0,470.0 1970.0,479.0 1907.0,514.0" fill="#c49a6c" stroke="#111" stroke-width="1.4" stroke-linejoin="round" />
<polygon points="1907.0,514.0 1970.0,479.0 1970.0,485.0 1907.0,520.0" fill="#a87848" stroke="#111" stroke-width="1.4" stroke-linejoin="round" />
<polyline points="1900.5,509.5 1963.5,474.5" fill="none" stroke="#333" stroke-width="1" stroke-linejoin="round" />
<polygon points="1894.0,497.0 1907.0,506.0 1907.0,520.0 1894.0,511.0" fill="#c8a070" stroke="#111" stroke-width="1.6" stroke-linejoin="round" />
<polyline points="1900.5,501.5 1900.5,515.5" fill="none" stroke="#222" stroke-width="1" stroke-linejoin="round" />
<polygon points="1925.5,479.5 1938.5,488.5 1938.5,502.5 1925.5,493.5" fill="#c8a070" stroke="#111" stroke-width="1.6" stroke-linejoin="round" />
<polyline points="1932.0,484.0 1932.0,498.0" fill="none" stroke="#222" stroke-width="1" stroke-linejoin="round" />
<polygon points="1957.0,462.0 1970.0,471.0 1970.0,485.0 1957.0,476.0" fill="#c8a070" stroke="#111" stroke-width="1.6" stroke-linejoin="round" />
<polyline points="1963.5,466.5 1963.5,480.5" fill="none" stroke="#222" stroke-width="1" stroke-linejoin="round" />
<polygon points="1975.0,422.0 1997.0,433.0 1977.0,445.0 1956.0,436.0" fill="#d8d8d8" stroke="#111" stroke-width="1.6" stroke-linejoin="round" />
<polygon points="1956.0,436.0 1977.0,445.0 1977.0,456.0 1956.0,447.0" fill="#f2f2f2" stroke="#111" stroke-width="1.6" stroke-linejoin="round" />
<polygon points="1977.0,445.0 1997.0,433.0 1997.0,444.0 1977.0,456.0" fill="#fbfbfb" stroke="#111" stroke-width="1.6" stroke-linejoin="round" />
<polygon points="2156.0,520.0 2178.0,531.0 2158.0,543.0 2137.0,534.0" fill="#d8d8d8" stroke="#111" stroke-width="1.6" stroke-linejoin="round" />
<polygon points="2137.0,534.0 2158.0,543.0 2158.0,554.0 2137.0,545.0" fill="#f2f2f2" stroke="#111" stroke-width="1.6" stroke-linejoin="round" />
<polygon points="2158.0,543.0 2178.0,531.0 2178.0,542.0 2158.0,554.0" fill="#fbfbfb" stroke="#111" stroke-width="1.6" stroke-linejoin="round" />
<polygon points="2033.0,278.0 2122.0,328.0 2113.0,336.4 2024.0,286.4" fill="#f4f4f4" stroke="#111" stroke-width="1.2" stroke-linejoin="round" />
<polygon points="2024.0,286.4 2113.0,336.4 2113.0,346.4 2024.0,296.4" fill="#fafafa" stroke="#111" stroke-width="1.2" stroke-linejoin="round" />
<polyline points="2055.2,290.5 2046.2,298.9 2046.2,308.9" fill="none" stroke="#111" stroke-width="1" stroke-linejoin="round" />
<polyline points="2077.5,303.0 2068.5,311.4 2068.5,321.4" fill="none" stroke="#111" stroke-width="1" stroke-linejoin="round" />
<polyline points="2099.8,315.5 2090.8,323.9 2090.8,333.9" fill="none" stroke="#111" stroke-width="1" stroke-linejoin="round" />
<polygon points="2081.0,268.0 2146.0,305.0 2137.0,313.4 2072.0,276.4" fill="#707070" stroke="#111" stroke-width="1.2" stroke-linejoin="round" />
<polygon points="2072.0,276.4 2137.0,313.4 2137.0,325.4 2072.0,288.4" fill="#5e5e5e" stroke="#111" stroke-width="1.2" stroke-linejoin="round" />
<polyline points="2113.5,286.5 2104.5,294.9 2104.5,306.9" fill="none" stroke="#111" stroke-width="1" stroke-linejoin="round" />
<polygon points="2143.0,333.0 2240.0,388.0 2231.0,396.4 2134.0,341.4" fill="#f4f4f4" stroke="#111" stroke-width="1.2" stroke-linejoin="round" />
<polygon points="2134.0,341.4 2231.0,396.4 2231.0,406.4 2134.0,351.4" fill="#fafafa" stroke="#111" stroke-width="1.2" stroke-linejoin="round" />
<polyline points="2162.4,344.0 2153.4,352.4 2153.4,362.4" fill="none" stroke="#111" stroke-width="1" stroke-linejoin="round" />
<polyline points="2181.8,355.0 2172.8,363.4 2172.8,373.4" fill="none" stroke="#111" stroke-width="1" stroke-linejoin="round" />
<polyline points="2201.2,366.0 2192.2,374.4 2192.2,384.4" fill="none" stroke="#111" stroke-width="1" stroke-linejoin="round" />
<polyline points="2220.6,377.0 2211.6,385.4 2211.6,395.4" fill="none" stroke="#111" stroke-width="1" stroke-linejoin="round" />
<polygon points="2168.0,318.0 2265.0,372.0 2256.0,380.4 2159.0,326.4" fill="#707070" stroke="#111" stroke-width="1.2" stroke-linejoin="round" />
<polygon points="2159.0,326.4 2256.0,380.4 2256.0,392.4 2159.0,338.4" fill="#5e5e5e" stroke="#111" stroke-width="1.2" stroke-linejoin="round" />
<polyline points="2200.3,336.0 2191.3,344.4 2191.3,356.4" fill="none" stroke="#111" stroke-width="1" stroke-linejoin="round" />
<polyline points="2232.7,354.0 2223.7,362.4 2223.7,374.4" fill="none" stroke="#111" stroke-width="1" stroke-linejoin="round" />
<polygon points="2215.0,516.0 2301.0,460.0 2328.0,443.0 2409.0,481.0 2291.0,569.0 2259.0,553.0 2257.0,541.0 2247.0,544.0 2215.0,527.0" fill="#888886" stroke="#111" stroke-width="1.2" stroke-linejoin="round" />
<polyline points="2301.0,460.0 2372.0,501.0" fill="none" stroke="#111" stroke-width="1.1" stroke-linejoin="round" />
<polyline points="2314.0,504.0 2342.0,520.0" fill="none" stroke="#111" stroke-width="1.1" stroke-linejoin="round" />
<polyline points="2215.0,514.0 2282.0,470.0" fill="none" stroke="#222" stroke-width="1.4" stroke-linejoin="round" />
<polyline points="2250.0,541.0 2314.0,488.0" fill="none" stroke="#222" stroke-width="1.6" stroke-linejoin="round" />
<polyline points="2258.0,546.0 2322.0,492.0" fill="none" stroke="#222" stroke-width="1" stroke-linejoin="round" />
<polygon points="2259.0,546.0 2291.0,563.0 2291.0,575.0 2259.0,558.0" fill="#f2f2f2" stroke="#111" stroke-width="1" stroke-linejoin="round" />
<polygon points="2291.0,563.0 2409.0,481.0 2420.0,487.0 2302.0,569.0" fill="#8f8f8b" stroke="#111" stroke-width="1.1" stroke-linejoin="round" />
<polygon points="2291.0,563.0 2302.0,569.0 2302.0,578.0 2291.0,575.0" fill="#777" stroke="#111" stroke-width="1" stroke-linejoin="round" />
<polygon points="2306.8,423.0 2333.0,408.0 2444.0,477.5 2430.0,487.0" fill="url(#conc)" stroke="#111" stroke-width="1.2" stroke-linejoin="round" />
<polygon points="2306.8,423.0 2430.0,487.0 2430.0,497.0 2407.0,483.0 2306.8,440.5" fill="#f0f0f0" stroke="#111" stroke-width="1" stroke-linejoin="round" />
<polygon points="2430.0,487.0 2444.0,477.5 2446.0,509.0 2432.0,516.0" fill="url(#conc)" stroke="#111" stroke-width="1.2" stroke-linejoin="round" />
<polygon points="2412.0,490.0 2430.0,500.0 2432.0,516.0 2412.0,503.0" fill="url(#conc)" stroke="#111" stroke-width="1" stroke-linejoin="round" />
<polyline points="2064.0,711.0 2253.0,583.0 2222.0,566.0 2258.0,546.0" fill="none" stroke="#111" stroke-width="11" stroke-linejoin="round" />
<polyline points="2064.0,711.0 2253.0,583.0 2222.0,566.0 2258.0,546.0" fill="none" stroke="#8e8e8a" stroke-width="7.5" stroke-linejoin="round" />
<polyline points="2108.0,668.0 2201.0,614.0" fill="none" stroke="#222" stroke-width="7" stroke-linejoin="round" />
<polyline points="2108.0,668.0 2201.0,614.0" fill="none" stroke="#8a8a8a" stroke-width="4.5" stroke-linejoin="round" />
<polyline points="1100.0,706.0 1891.0,168.0 2453.0,472.0 2453.0,500.0 1654.0,1041.0 1100.0,745.0" fill="none" stroke="#8a3ce8" stroke-width="1.6" stroke-linejoin="round" stroke-dasharray="6 5"/>
<polyline points="1100.0,720.0 1891.0,197.0 2440.0,494.0" fill="none" stroke="#8a3ce8" stroke-width="1.4" stroke-linejoin="round" stroke-dasharray="6 5"/>
<polyline points="1100.0,722.0 1654.0,1013.0 2432.0,492.0" fill="none" stroke="#8a3ce8" stroke-width="1.4" stroke-linejoin="round" stroke-dasharray="6 5"/>
<polyline points="1891.0,169.0 1891.0,197.0" fill="none" stroke="#8a3ce8" stroke-width="1.4" stroke-linejoin="round" stroke-dasharray="6 5"/>
</g>
<ellipse cx="2455" cy="167" rx="74" ry="45" fill="none" stroke="#e2e2e2" stroke-width="2.5"/>
<ellipse cx="2455" cy="167" rx="58" ry="34" fill="none" stroke="#ebebeb" stroke-width="2"/>
<ellipse cx="2452" cy="172" rx="48" ry="20" fill="#ececec" opacity="0.9"/>
<polygon points="2452.0,91.0 2493.0,110.0 2458.0,134.0 2414.0,112.0" fill="#f5f5f5" stroke="#c4c4c4" stroke-width="1" stroke-linejoin="round" />
<polygon points="2414.0,112.0 2458.0,134.0 2456.0,179.0 2417.0,153.0" fill="#ededed" stroke="#c4c4c4" stroke-width="1" stroke-linejoin="round" />
<polygon points="2458.0,134.0 2493.0,110.0 2492.0,151.0 2456.0,179.0" fill="#e8e8e8" stroke="#c4c4c4" stroke-width="1" stroke-linejoin="round" />
<text x="2425" y="140" font-family="Liberation Sans" font-size="10" fill="#aaa" transform="rotate(25 2425 140)">LEFT</text>
<text x="2462" y="155" font-family="Liberation Sans" font-size="9" fill="#aaa" transform="rotate(-38 2462 155)">FRONT</text>
<text x="2443" y="118" font-family="Liberation Sans" font-size="9" fill="#aaa" transform="rotate(-30 2443 118)">TOP</text>
<text x="2375" y="185" font-family="Liberation Sans" font-size="13" fill="#c4c4c4" transform="rotate(-30 2375 185)">W</text>
<text x="2473" y="214" font-family="Liberation Sans" font-size="13" fill="#c4c4c4" transform="rotate(-30 2473 214)">S</text>
<text x="2503" y="146" font-family="Liberation Sans" font-size="13" fill="#c4c4c4" transform="rotate(-30 2503 146)">E</text>
<rect x="2518.5" y="228.5" width="39" height="134" rx="5" fill="#f4f4f4" stroke="#b8b8b8" stroke-width="1.2"/>
<circle cx="2549" cy="235" r="3" fill="none" stroke="#999"/><circle cx="2549" cy="355" r="3" fill="none" stroke="#999"/>
<circle cx="2538" cy="264" r="12" fill="none" stroke="#aaa" stroke-width="1.5"/><circle cx="2538" cy="264" r="7" fill="none" stroke="#bbb" stroke-width="1.5"/>
<path d="M2535 286h6l-3 3z" fill="#777"/><path d="M2523 294h33" stroke="#ccc"/>
<rect x="2528" y="304" width="13" height="11" fill="#9fd08a"/><circle cx="2542" cy="317" r="4" fill="none" stroke="#666" stroke-width="1.3"/>
<path d="M2535 335h6l-3 3z" fill="#777"/>
<rect x="2558" y="26" width="2" height="1110" fill="#e2e2e2"/>
</svg>

<!-- dialog -->
<div class="a" style="left:403px;top:54px;width:701px;height:928px;border-radius:8px;box-shadow:0 18px 56px rgba(0,0,0,0.24),0 2px 12px rgba(0,0,0,0.10)"></div>
<div class="a" style="left:403px;top:54px;width:701px;height:928px;border-radius:8px;background:#f0f0f0;overflow:hidden">
<div class="a" style="left:0.0px;top:0.0px;width:701.0px;height:35.0px;background:#f9f9f9"></div>
<svg class="a" style="left:9.0px;top:5.0px" width="22" height="22" viewBox="0 0 22 22"><path d="M2 21L20 2" stroke="#5cb130" stroke-width="2.2"/><circle cx="10.5" cy="11.5" r="7.5" fill="#1e90d0"/><path d="M5.8 11.5H15.2M15 10.6A4.6 4.6 0 1 0 14.2 14.8" fill="none" stroke="#fff" stroke-width="2.2"/></svg>
<div class="t" style="left:35.0px;top:12.0px;font-size:13.4px;color:#7c7c7c">Ideate Explorer 2025.2</div>
<div class="a" style="left:563.0px;top:16.5px;width:12.0px;height:1.3px;background:#8a8a8a"></div>
<div class="a" style="left:615.0px;top:10.6px;width:12.0px;height:12.0px;border:1.3px solid #8a8a8a;border-radius:1px"></div>
<svg class="a" style="left:669.0px;top:11.0px" width="13" height="13"><path d="M0.5 0.5L12.5 12.5M12.5 0.5L0.5 12.5" stroke="#8a8a8a" stroke-width="1.3"/></svg>
<div class="a" style="left:0.0px;top:35.0px;width:701.0px;height:30.0px;background:#a3a3a3"></div>
<div class="t" style="left:7.0px;top:44.9px;font-size:13.6px;color:#1e1e1e">Project: 2025 Snowden Towers Sample Architectural.rvt</div>
<svg class="a" style="left:637.0px;top:42.0px" width="16" height="16" viewBox="0 0 16 16"><path d="M8 0.5l1.4 1.8 2.2-.6.4 2.3 2.2.9-.9 2.1 1.4 1.8-1.9 1.3.2 2.3-2.3.1-.8 2.2-2-1.1-2 1.1-.8-2.2-2.3-.1.2-2.3L.3 8.9l1.4-1.8L.8 5l2.2-.9.4-2.3 2.2.6z" fill="#111"/><circle cx="8" cy="8" r="2.6" fill="#a3a3a3"/></svg>
<svg class="a" style="left:662.0px;top:40.0px" width="19" height="19" viewBox="0 0 19 19"><circle cx="9.5" cy="9.5" r="8.3" fill="#fff" stroke="#222" stroke-width="1.4"/><text x="9.5" y="14" text-anchor="middle" font-family="Liberation Sans" font-weight="bold" font-size="12" fill="#2a4fc0">?</text></svg>
<svg class="a" style="left:688.0px;top:47.0px" width="10" height="7"><path d="M0 0H9L4.5 6Z" fill="#111"/></svg>
<div class="t" style="left:20.0px;top:84.7px;font-size:13.3px;color:#222">Display:</div>
<div class="t" style="left:20.0px;top:113.4px;font-size:13.3px;color:#222">Sort by:</div>
<div class="t" style="left:20.0px;top:147.2px;font-size:13.3px;color:#222">Filter:</div>
<div class="t" style="left:20.0px;top:188.3px;font-size:13.3px;color:#222">Search:</div>
<div class="a" style="left:75.0px;top:78.0px;width:537.0px;height:25.0px;background:#f0f0f0;border:1px solid #d9d9d9"></div>
<div class="t" style="left:81.0px;top:83.5px;font-size:13.6px;color:#8c8c8c">Warnings</div>
<svg class="a" style="left:596.0px;top:89.0px" width="9" height="6"><path d="M1 1L4.5 4.5L8 1" fill="none" stroke="#c0c0c0" stroke-width="1.2"/></svg>
<div class="a" style="left:75.0px;top:111.0px;width:537.0px;height:25.0px;background:linear-gradient(#f2f2f2,#e4e4e4);border:1px solid #acacac;border-radius:1px"></div>
<div class="t" style="left:82.0px;top:118.0px;font-size:13.6px;color:#1a1a1a">Types</div>
<svg class="a" style="left:596.0px;top:121.0px" width="9" height="6"><path d="M1 1L4.5 4.5L8 1" fill="none" stroke="#444" stroke-width="1.3"/></svg>
<div class="a" style="left:75.0px;top:145.5px;width:537.0px;height:25.0px;background:linear-gradient(#f2f2f2,#e4e4e4);border:1px solid #acacac;border-radius:1px"></div>
<div class="t" style="left:83.0px;top:152.5px;font-size:13.6px;color:#1a1a1a">&lt;None&gt;</div>
<svg class="a" style="left:596.0px;top:155.5px" width="9" height="6"><path d="M1 1L4.5 4.5L8 1" fill="none" stroke="#444" stroke-width="1.3"/></svg>
<div class="a" style="left:75.0px;top:179.5px;width:503.0px;height:27.5px;background:#fff;border:1px solid #a9a9a9;border-top-color:#8a8a8a"></div>
<div class="a" style="left:585.0px;top:179.5px;width:28.0px;height:27.5px;background:#f4f4f4;border:1px solid #cfcfcf"></div>
<svg class="a" style="left:588.0px;top:182.0px" width="22" height="22" viewBox="0 0 22 22"><g fill="none" stroke="#777" stroke-width="1.5"><circle cx="6" cy="14" r="3.5"/><circle cx="14" cy="14" r="3.5"/><path d="M3 13V5Q6 2 8 5V12M11 12V5Q13 2 16 5V13"/></g><path d="M14 15L20 21M20 15L14 21" stroke="#e04040" stroke-width="1.5"/></svg>
<svg class="a" style="left:624.0px;top:183.0px" width="22" height="22" viewBox="0 0 22 22"><path d="M3 20L20 3" stroke="#5cb130" stroke-width="2.4"/><circle cx="11" cy="10.5" r="6.5" fill="none" stroke="#1290d0" stroke-width="3.4"/><path d="M13 13L17 17.5" stroke="#1290d0" stroke-width="3.2"/></svg>
<svg class="a" style="left:622.0px;top:77.0px" width="30" height="30" viewBox="0 0 30 30"><circle cx="12.5" cy="18" r="9.5" fill="#e8202a"/><path d="M17 10L20 7" stroke="#e8202a" stroke-width="4"/><path d="M9 14A5 5 0 0 1 12 11.5" stroke="#fff" stroke-width="1.6" fill="none"/><g stroke="#e04040" stroke-width="1.2"><path d="M21 6L25 2M22 4L22 0M23 6L28 5M21.5 7L26 9"/></g></svg>
<svg class="a" style="left:618.0px;top:137.0px" width="28" height="28" viewBox="0 0 28 28"><path d="M4 24L6 18L21 3L26 8L11 23Z" fill="#f1d77a" stroke="#b38a30" stroke-width="1.2"/><path d="M21 3L26 8L24 10L19 5Z" fill="#e8a090"/><path d="M4 24L6 18L10 22Z" fill="#fff" stroke="#777" stroke-width="1"/></svg>
<svg class="a" style="left:656.0px;top:139.0px" width="30" height="28" viewBox="0 0 30 28"><path d="M2 4H24L16 13V23L10 20V13Z" fill="#c8c8c8" stroke="#6a6a6a" stroke-width="1.3"/><ellipse cx="13" cy="4.5" rx="11" ry="2.5" fill="#e0e0e0" stroke="#6a6a6a" stroke-width="1.2"/><path d="M19 14L19 25L21.5 22.5L24 27L25.5 26L23 21.5L26.5 21.5Z" fill="#fff" stroke="#333" stroke-width="1"/></svg>
<div class="a" style="left:14.0px;top:245.0px;width:674.0px;height:632.0px;background:#fff;border:1px solid #d6d6d6"></div>
<div class="a" style="left:16.0px;top:220.0px;width:81.0px;height:26.0px;background:#ececec;border:1px solid #d6d6d6;border-bottom:none"></div>
<div class="a" style="left:96.5px;top:220.0px;width:90.0px;height:26.0px;background:#ececec;border:1px solid #d6d6d6;border-bottom:none"></div>
<div class="a" style="left:186.0px;top:216.8px;width:98.5px;height:29.5px;background:#fff;border:1px solid #d6d6d6;border-bottom:none"></div>
<svg class="a" style="left:23.0px;top:223.0px" width="18" height="18" viewBox="0 0 18 18"><circle cx="11" cy="7" r="5" fill="none" stroke="#3a9ae0" stroke-width="1.8"/><path d="M7.5 10.5L2 16" stroke="#3a9ae0" stroke-width="2.4"/></svg>
<div class="t" style="left:43.4px;top:225.5px;font-size:13.6px;color:#222">Explore</div>
<svg class="a" style="left:102.0px;top:223.0px" width="20" height="20" viewBox="0 0 20 20"><circle cx="10" cy="10" r="8.5" fill="none" stroke="#3aa6d8" stroke-width="1.6"/><path d="M13.5 5.5L9 9L6.5 14.5L11 11Z" fill="#2a8ac8"/></svg>
<div class="t" style="left:126.5px;top:225.5px;font-size:13.6px;color:#222">Navigate</div>
<svg class="a" style="left:194.0px;top:222.0px" width="20" height="20" viewBox="0 0 20 20"><circle cx="8.5" cy="12" r="6.5" fill="#7a7a7a"/><path d="M12 7L14 5" stroke="#7a7a7a" stroke-width="3"/><circle cx="16" cy="3.5" r="1.8" fill="none" stroke="#999" stroke-width="1"/></svg>
<div class="t" style="left:217.0px;top:225.5px;font-size:13.6px;color:#222">Warnings</div>
<svg class="a" style="left:552.0px;top:220.0px" width="22" height="22" viewBox="0 0 22 22"><path d="M3 3L19 19M19 3L3 19" stroke="#e02828" stroke-width="4" stroke-linecap="round"/></svg>
<svg class="a" style="left:578.0px;top:218.0px" width="24" height="26" viewBox="0 0 24 26"><path d="M4 13A8 8 0 0 1 17 6L14 3H21V10L18 7" fill="none" stroke="#2f8de4" stroke-width="3.2"/><path d="M20 13A8 8 0 0 1 7 20L10 23H3V16L6 19" fill="none" stroke="#2f8de4" stroke-width="3.2"/></svg>
<svg class="a" style="left:608.0px;top:224.0px" width="18" height="14"><rect x="1" y="1" width="16" height="12" fill="#fff" stroke="#444" stroke-width="1.4"/><path d="M1 4.5H17M1 8.5H17M6 4.5V13" stroke="#444" stroke-width="1.2"/></svg>
<svg class="a" style="left:632.0px;top:233.0px" width="11" height="7"><path d="M0 0H10L5 6Z" fill="#333"/></svg>
<svg class="a" style="left:649.0px;top:220.0px" width="20" height="20" viewBox="0 0 20 20"><path d="M2 7L8 1L19 10L12 18Z" fill="#b8c8e8" stroke="#444" stroke-width="1.3"/><circle cx="7" cy="6" r="1.5" fill="#444"/></svg>
<svg class="a" style="left:676.0px;top:233.0px" width="11" height="7"><path d="M0 0H10L5 6Z" fill="#333"/></svg>
<div class="t" style="left:21.7px;top:251.8px;font-size:13.5px;color:#222">Warnings (75)</div>
<div class="a" style="left:19.5px;top:273.7px;width:663.0px;height:310.3px;background:#fff;border:1px solid #8c8c8c"></div>
<svg class="a" style="left:29.0px;top:283.5px" width="8" height="8"><path d="M7 0.5V7H0.5Z" fill="#333"/></svg>
<div class="a" style="left:45.6px;top:282.5px;width:10.0px;height:10.0px;background:#e41010;border:1.5px solid #222"></div>
<div class="t" style="right:599.0px;top:280.6px;font-size:13.6px;color:#222">(1)</div>
<div class="t" style="left:113.0px;top:280.5px;font-size:13.75px;color:#222">Highlighted floors overlap.</div>
<svg class="a" style="left:50.0px;top:305.3px" width="8" height="8"><path d="M7 0.5V7H0.5Z" fill="#333"/></svg>
<div class="t" style="left:73.3px;top:302.4px;font-size:13.6px;color:#222">Elements 2</div>
<div class="a" style="left:87.7px;top:319.8px;width:166.7px;height:21.8px;background:#0a78d7"></div>
<div class="t" style="left:93.4px;top:324.2px;font-size:13.6px;color:#fff">Concrete Slab 4" Instance</div>
<div class="a" style="left:87.7px;top:341.9px;width:204.1px;height:21.5px;background:#0a78d7"></div>
<div class="t" style="left:93.4px;top:346.0px;font-size:13.6px;color:#fff">Finish Floor - Laminate Instance</div>
<svg class="a" style="left:30.0px;top:369.7px" width="7" height="10"><path d="M1 0.8L6 5L1 9.2Z" fill="none" stroke="#9a9a9a" stroke-width="1"/></svg>
<div class="a" style="left:45.6px;top:369.7px;width:10.0px;height:10.0px;background:#e41010;border:1.5px solid #222"></div>
<div class="t" style="right:599.0px;top:367.8px;font-size:13.6px;color:#222">(51)</div>
<div class="t" style="left:113.0px;top:367.7px;font-size:13.75px;color:#222">There are identical instances in the same place.</div>
<svg class="a" style="left:30.0px;top:391.5px" width="7" height="10"><path d="M1 0.8L6 5L1 9.2Z" fill="none" stroke="#9a9a9a" stroke-width="1"/></svg>
<div class="a" style="left:45.6px;top:391.5px;width:10.0px;height:10.0px;background:#f0e020;border:1.5px solid #222"></div>
<div class="t" style="right:599.0px;top:389.6px;font-size:13.6px;color:#222">(4)</div>
<div class="t" style="left:113.0px;top:389.5px;font-size:13.75px;color:#222">Could not create Wall Sweep.</div>
<svg class="a" style="left:30.0px;top:413.3px" width="7" height="10"><path d="M1 0.8L6 5L1 9.2Z" fill="none" stroke="#9a9a9a" stroke-width="1"/></svg>
<div class="a" style="left:45.6px;top:413.3px;width:10.0px;height:10.0px;background:#f0e020;border:1.5px solid #222"></div>
<div class="t" style="right:599.0px;top:411.4px;font-size:13.6px;color:#222">(8)</div>
<div class="t" style="left:113.0px;top:411.3px;font-size:13.75px;color:#222">Highlighted walls overlap.</div>
<svg class="a" style="left:30.0px;top:435.1px" width="7" height="10"><path d="M1 0.8L6 5L1 9.2Z" fill="none" stroke="#9a9a9a" stroke-width="1"/></svg>
<div class="a" style="left:45.6px;top:435.1px;width:10.0px;height:10.0px;background:#20b020;border:1.5px solid #222"></div>
<div class="t" style="right:599.0px;top:433.2px;font-size:13.6px;color:#222">(3)</div>
<div class="t" style="left:113.0px;top:433.1px;font-size:13.75px;color:#222">Highlighted elements are joined but do not inters...</div>
<svg class="a" style="left:30.0px;top:456.9px" width="7" height="10"><path d="M1 0.8L6 5L1 9.2Z" fill="none" stroke="#9a9a9a" stroke-width="1"/></svg>
<div class="a" style="left:45.6px;top:456.9px;width:10.0px;height:10.0px;background:#20b020;border:1.5px solid #222"></div>
<div class="t" style="right:599.0px;top:455.0px;font-size:13.6px;color:#222">(1)</div>
<div class="t" style="left:113.0px;top:454.9px;font-size:13.75px;color:#222">Highlighted lines overlap.</div>
<svg class="a" style="left:30.0px;top:478.7px" width="7" height="10"><path d="M1 0.8L6 5L1 9.2Z" fill="none" stroke="#9a9a9a" stroke-width="1"/></svg>
<div class="a" style="left:45.6px;top:478.7px;width:10.0px;height:10.0px;background:#20b020;border:1.5px solid #222"></div>
<div class="t" style="right:599.0px;top:476.8px;font-size:13.6px;color:#222">(2)</div>
<div class="t" style="left:113.0px;top:476.7px;font-size:13.75px;color:#222">Some panels in this curtain system are slightly mal...</div>
<svg class="a" style="left:30.0px;top:500.5px" width="7" height="10"><path d="M1 0.8L6 5L1 9.2Z" fill="none" stroke="#9a9a9a" stroke-width="1"/></svg>
<div class="a" style="left:45.6px;top:500.5px;width:10.0px;height:10.0px;background:#20b020;border:1.5px solid #222"></div>
<div class="t" style="right:599.0px;top:498.6px;font-size:13.6px;color:#222">(1)</div>
<div class="t" style="left:113.0px;top:498.5px;font-size:13.75px;color:#222">Thickness of this Roof may be slightly inaccurate d...</div>
<svg class="a" style="left:30.0px;top:522.3px" width="7" height="10"><path d="M1 0.8L6 5L1 9.2Z" fill="none" stroke="#9a9a9a" stroke-width="1"/></svg>
<div class="a" style="left:45.6px;top:522.3px;width:10.0px;height:10.0px;background:#ffffff;border:1.5px solid #222"></div>
<div class="t" style="right:599.0px;top:520.4px;font-size:13.6px;color:#222">(4)</div>
<div class="t" style="left:113.0px;top:520.3px;font-size:13.75px;color:#222">Ref Plane is slightly off axis and may cause inaccur...</div>
<div class="a" style="left:331.0px;top:589.2px;width:3.0px;height:3.0px;background:#6a6a6a"></div>
<div class="a" style="left:343.5px;top:589.2px;width:3.0px;height:3.0px;background:#6a6a6a"></div>
<div class="a" style="left:355.5px;top:589.2px;width:3.0px;height:3.0px;background:#6a6a6a"></div>
<div class="a" style="left:368.5px;top:589.2px;width:3.0px;height:3.0px;background:#6a6a6a"></div>
<div class="t" style="left:21.4px;top:599.1px;font-size:14px;color:#222;font-weight:bold">Information</div>
<div class="a" style="left:19.8px;top:615.7px;width:662.8px;height:255.1px;background:#fff;border:1px solid #8c8c8c"></div>
<div class="a" style="left:24.7px;top:629.7px;width:83.7px;height:83.1px;background:#fff;border:1px solid #d8d8d8"></div>
<div class="a" style="left:28.6px;top:664.6px;width:74.3px;height:13.0px;background:#a9a9a9;border:1px solid #555;border-right-width:2.5px;border-top-color:#999"></div>
<div class="t" style="left:119.0px;top:620.4px;font-size:13px;color:#1a1a1a;font-weight:bold">Id:</div>
<div class="t" style="left:233.0px;top:619.9px;font-size:13.6px;color:#333">2114707</div>
<div class="t" style="left:119.0px;top:639.0px;font-size:13px;color:#1a1a1a;font-weight:bold">Category:</div>
<div class="t" style="left:233.0px;top:638.5px;font-size:13.6px;color:#333">Floors</div>
<div class="t" style="left:119.0px;top:657.5px;font-size:13px;color:#1a1a1a;font-weight:bold">Type:</div>
<div class="t" style="left:233.0px;top:657.0px;font-size:13.6px;color:#333">Finish Floor - Laminate</div>
<div class="t" style="left:119.0px;top:676.1px;font-size:13px;color:#1a1a1a;font-weight:bold">Name:</div>
<div class="t" style="left:233.0px;top:675.6px;font-size:13.6px;color:#333">Finish Floor - Laminate Instance</div>
<div class="t" style="left:119.0px;top:694.7px;font-size:13px;color:#1a1a1a;font-weight:bold">Level:</div>
<div class="t" style="left:233.0px;top:694.2px;font-size:13.6px;color:#333">L1 - Block 37</div>
<div class="t" style="left:119.0px;top:713.2px;font-size:13px;color:#1a1a1a;font-weight:bold">Created&nbsp; By:</div>
<div class="t" style="left:119.0px;top:731.8px;font-size:13px;color:#1a1a1a;font-weight:bold">Last Updated By:</div>
<div class="a" style="left:15.0px;top:893.0px;width:85.6px;height:23.4px;background:#efefef;border:1px solid #d4d4d4"></div>
<div class="a" style="left:107.0px;top:893.0px;width:86.0px;height:23.4px;background:#efefef;border:1px solid #d4d4d4"></div>
<div class="t" style="left:15px;width:85.6px;text-align:center;top:898.4px;color:#8f8f8f">All</div>
<div class="t" style="left:107px;width:86px;text-align:center;top:898.4px;color:#8f8f8f">None</div>
<div class="t" style="right:18.3px;top:898.4px;color:#222">2 selected</div>
</div>
<div class="a" style="left:403px;top:54px;width:701px;height:928px;border-radius:8px;border:1px solid #c4c4c4"></div>
</body></html>
